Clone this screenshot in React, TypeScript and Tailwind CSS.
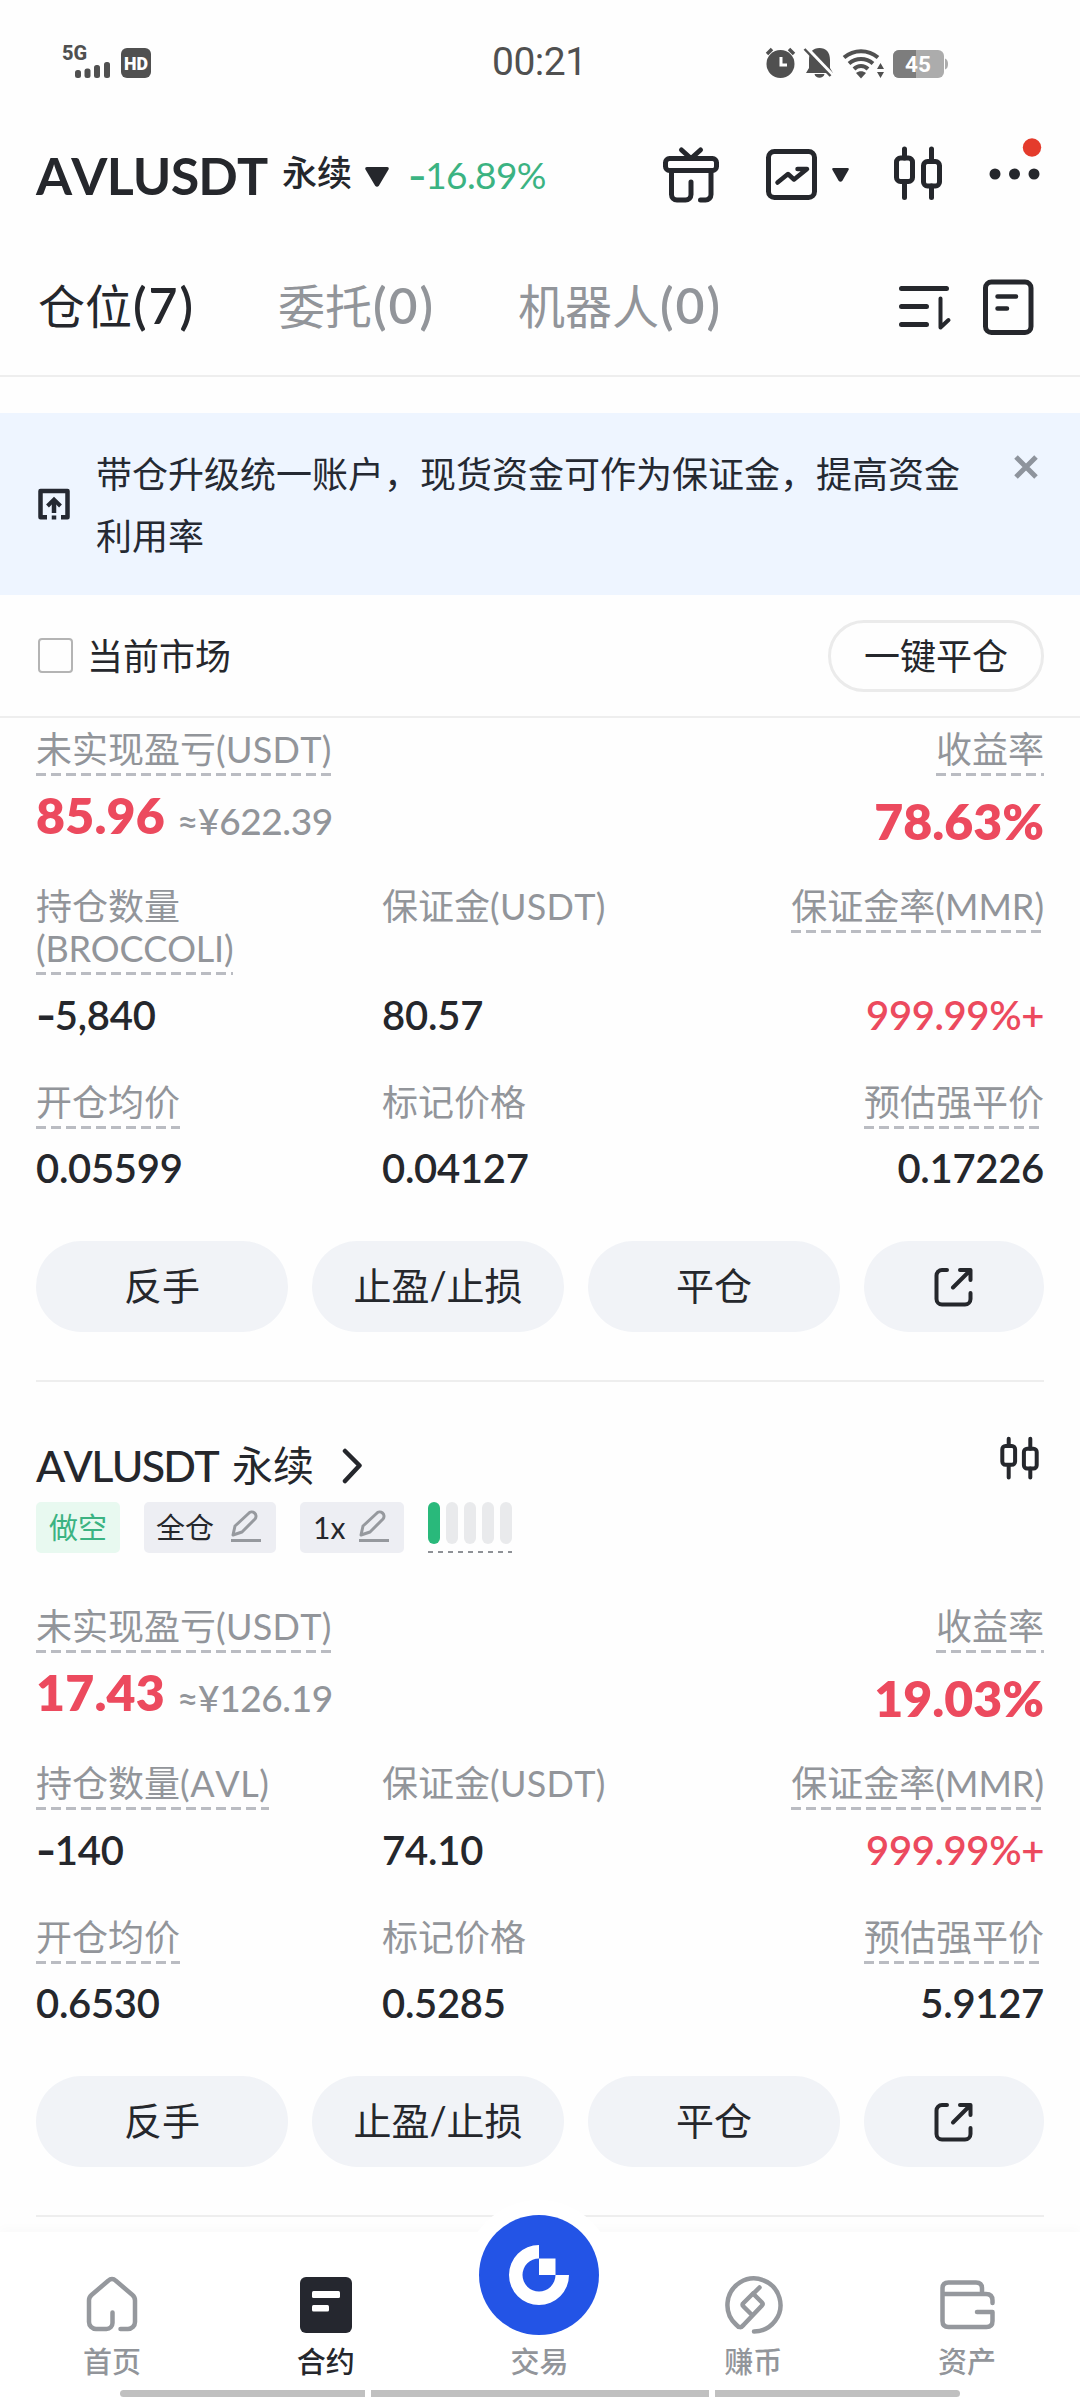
import type { ReactNode } from "react";

function Candles({ className }: { className: string }) {
  return (
    <svg viewBox="0 0 56 60" fill="none" stroke="#25272c" strokeWidth="5" strokeLinecap="round" className={className}>
      <rect x="6.5" y="15" width="16" height="23.5" rx="4" />
      <path d="M14.5 6v9M14.5 39v15.5M41.5 6v12.500M41.5 43v11.500" />
      <rect x="33.500" y="18.500" width="16" height="24.500" rx="4" />
    </svg>
  );
}

function Pencil() {
  return (
    <svg viewBox="0 0 32 34" fill="none" stroke="#96999e" strokeWidth="3" strokeLinejoin="round" className="-mt-[3px] h-[34px] w-8">
      <path d="M3 26l2-9L18.500 4.500a4 4 0 0 1 6.500 5.500L12 23z" />
      <path d="M1 31.500h30" />
    </svg>
  );
}

function Minus() {
  return <b className="mr-[4px] inline-block origin-left scale-x-[1.350] font-[inherit]">-</b>;
}

function StatusBar() {
  return (
    <div className="flex h-[124px] items-center pl-[62px] text-[#505050]">
      <svg viewBox="0 -10 92 44" className="mb-[10px] h-[44px] w-[92px]" fill="#505050">
        <text x="0" y="15" fontFamily="Roboto" fontWeight="800" fontSize="20">5G</text>
        <rect x="13" y="25" width="6" height="8" rx="2.500" />
        <rect x="22.500" y="23.500" width="6" height="9.500" rx="2.500" />
        <rect x="32" y="20" width="6" height="13" rx="2.500" />
        <rect x="42" y="17" width="6" height="16" rx="2.500" />
        <rect x="59" y="3" width="30" height="30" rx="6" />
        <text x="62" y="25" fontFamily="Roboto" fontWeight="900" fontSize="19" fill="#fff" textLength="24" lengthAdjust="spacingAndGlyphs">HD</text>
      </svg>
      <div className="ml-[338px] w-[96px] font-['Roboto'] text-[39px] leading-[40px] font-[450] tracking-[-0.5px]">00:21</div>
      <svg viewBox="0 0 186 34" className="ml-[177px] h-[34px] w-[186px]" fill="#505050">
        <circle cx="15.500" cy="19" r="14" />
        <path d="M2 9l5-5M29 9l-5-5" stroke="#505050" strokeWidth="3.500" />
        <path d="M16 12v8h6" stroke="#fff" strokeWidth="3" fill="none" />
        <path d="M41 28l3-5v-8c0-8 4-12 10.500-12s10.500 4 10.500 12v8l3 5zM49.500 29h10c-1 5-9 5-10 0z" />
        <path d="M39 0L69 31.500" stroke="#fefefe" strokeWidth="3.500" />
        <path d="M39.500 4L65.500 31" stroke="#505050" strokeWidth="2.500" />
        <g fill="none" stroke="#505050" strokeWidth="4">
          <path d="M79 12.500C89 4 103 4 113 12.500" />
          <path d="M84 18.500c7-6 17-6 24 0" />
          <path d="M89 24c4-4 10-4 14 0" />
        </g>
        <path d="M91 28c3-2.500 7-2.500 10 0l-5 5.500z" />
        <path d="M112 24l3.500-6 3.500 6zM112 27h7l-3.500 6z" />
        <rect x="128" y="5" width="51" height="28" rx="6" fill="#acacac" />
        <path d="M151 5v28h-17a6 6 0 0 1-6-6V11a6 6 0 0 1 6-6z" fill="#7d7d7d" />
        <path d="M180 13.500q3 1 3 5.500t-3 5.500z" fill="#acacac" />
        <text x="140" y="27" fontFamily="Roboto" fontWeight="700" fontSize="22.500" fill="#fff">45</text>
      </svg>
    </div>
  );
}

function MarketHeader() {
  return (
    <div className="flex h-[102px] items-center pl-9">
      <span className="-mt-px w-[246px] text-[52px] leading-[60px] font-bold tracking-[-0.8px] [font-kerning:none]">AVLUSDT</span>
      <span className="-mt-[6px] text-[35px] leading-[60px] font-medium">永续</span>
      <svg viewBox="0 0 26 22" className="mt-1 ml-3 h-[22px] w-[26px]" fill="#25272c">
        <path d="M3 1h20q2.500 0 1.500 2.500L15 19.500q-2 2.500-4 0L1.500 3.500Q.5 1 3 1z" />
      </svg>
      <span className="-mt-px ml-[18px] w-[142px] text-[37px] leading-[60px] tracking-[-0.6px] text-[#3bb382]"><Minus />16.89%</span>
      <svg viewBox="0 0 62 60" fill="none" stroke="#25272c" strokeWidth="5" strokeLinecap="round" strokeLinejoin="round" className="ml-[110px] -mt-px h-[60px] w-[62px]">
        <rect x="5.500" y="13.500" width="51" height="12" rx="4" />
        <path d="M21.500 5L31 13.500 40.500 5" />
        <path d="M11.500 27v22.500a5.500 5.500 0 0 0 5.500 5.500h8.500a5.500 5.500 0 0 0 5.500-5.500V37M51 27v22.500a5.500 5.500 0 0 1-5.500 5.500H40.500" />
      </svg>
      <svg viewBox="0 0 58 58" fill="none" stroke="#25272c" strokeWidth="5" strokeLinecap="round" strokeLinejoin="round" className="ml-[41px] -mt-px h-[58px] w-[58px]">
        <rect x="5.500" y="5.500" width="46" height="46" rx="6" />
        <path strokeWidth="4.500" d="M14.500 36.500L25 28l6 5.500L44 23H34.500" />
      </svg>
      <svg viewBox="0 0 17 14" className="ml-[11px] h-[14px] w-[17px]" fill="#25272c">
        <path d="M1.500 0h14q2 0 1 2l-6 10.500q-2 2.500-4 0L.5 2q-1-2 1-2z" />
      </svg>
      <Candles className="ml-[41px] -mt-1 h-[60px] w-14" />
      <svg viewBox="0 -10 60 80" className="ml-[40px] -mt-[5px] h-[80px] w-[60px]" fill="#25272c">
        <circle cx="9" cy="31" r="5.500" />
        <circle cx="28.500" cy="31" r="5.500" />
        <circle cx="48" cy="31" r="5.500" />
        <circle cx="46" cy="4.500" r="9.200" fill="#e43b2c" />
      </svg>
    </div>
  );
}

function Tabs() {
  return (
    <div className="flex h-[151px] items-center border-b-2 border-[#eeeeee] pt-[10px] pl-[38px] text-[47px] leading-[60px] text-[#92959a] [&_b]:ml-px [&_b]:text-[50px] [&_b]:font-semibold [&_b]:tracking-[2px]">
      <span className="w-[240px] text-[#25272c]">仓位<b>(7)</b></span>
      <span className="w-[240px]">委托<b>(0)</b></span>
      <span className="w-[378px]">机器人<b>(0)</b></span>
      <svg viewBox="0 0 56 50" fill="none" stroke="#25272c" strokeWidth="5" strokeLinecap="round" strokeLinejoin="round" className="mt-1 h-[50px] w-14">
        <path d="M5.500 5.500h45M5.500 23.500h25M5.500 41.500h25" />
        <path strokeWidth="4" d="M44.500 15.500v29L52.500 37" />
      </svg>
      <svg viewBox="0 0 56 60" fill="none" stroke="#25272c" strokeWidth="5" strokeLinecap="round" className="mt-[2px] ml-[30px] h-[60px] w-14">
        <rect x="3.500" y="5" width="45.500" height="50.500" rx="6" />
        <path strokeWidth="4.500" d="M15.500 19.500h18.500M15.500 31.500h9.500" />
      </svg>
    </div>
  );
}

function Banner() {
  return (
    <div className="mt-9 flex h-[182px] bg-[#eef5ff] pl-[38px]">
      <svg viewBox="0 0 32 32" fill="none" stroke="#252932" className="mt-[75px] h-8 w-8">
        <path strokeWidth="4.500" strokeLinejoin="round" d="M9 29.200H2.500V3H29.500v26.200H23" />
        <path strokeWidth="4.500" d="M16 12v13M16 27.500v4" />
        <path strokeWidth="4" d="M9.500 18l6.500-6.500 6.500 6.500" />
      </svg>
      <p className="mt-[30px] ml-[26px] w-[870px] text-[36px] leading-[62px] text-[#252932]">
        带仓升级统一账户，现货资金可作为保证金，提高资金
        <br />
        利用率
      </p>
      <svg viewBox="0 0 24 24" stroke="#8e949d" strokeWidth="5" className="mt-[42px] ml-[48px] h-6 w-6">
        <path d="M2 2l20 20M22 2L2 22" />
      </svg>
    </div>
  );
}

function FilterRow() {
  return (
    <div className="flex h-[123px] items-center border-b-2 border-[#eeeeee] pr-9 pl-[38px] text-[36px] text-[#25272c]">
      <span className="h-[35px] w-[35px] rounded-[4px] border-[2.5px] border-[#b4b4b4]" />
      <span className="ml-[14px] leading-[44px]">当前市场</span>
      <button className="ml-auto h-[72px] w-[216px] rounded-full border-[3px] border-[#ebebeb] text-[36px] leading-[60px]">一键平仓</button>
    </div>
  );
}

function Label({ children, dashed = true }: { children: ReactNode; dashed?: boolean }) {
  return (
    <div className="flex h-fit w-fit flex-col pt-px text-[36px] leading-[42px] text-[#92959a] [font-kerning:none]">
      <span>{children}</span>
      <span
        className={
          dashed
            ? "mt-[3px] h-[3px] bg-[repeating-linear-gradient(90deg,#babcc2_0_10px,transparent_10px_15px)]"
            : "mt-[3px] h-[3px]"
        }
      />
    </div>
  );
}

function Action({ children }: { children: ReactNode }) {
  return (
    <button className="flex h-[91px] w-[252px] items-center justify-center rounded-full bg-[#f1f3f7] pb-[3px] text-[38px] leading-[60px] text-[#25272c]">
      {children}
    </button>
  );
}

type Position = {
  pnl: string;
  fiat: string;
  roi: string;
  size: string;
  margin: string;
  entry: string;
  mark: string;
  liq: string;
  sizeLabel: ReactNode;
};

function PositionBody({ p }: { p: Position }) {
  return (
    <>
      <div className="flex h-[157px] justify-between">
        <div>
          <Label>未实现盈亏<b className="font-normal tracking-[0.3px]">(USDT)</b></Label>
          <div className="mt-[9px] flex items-baseline leading-[60px]">
            <span className="w-[141px] text-[50px] font-extrabold tracking-[0.2px] text-[#ec4a5e]">{p.pnl}</span>
            <span className="translate-y-px text-[37px] font-medium tracking-[-0.4px] text-[#92959a]">≈¥{p.fiat}</span>
          </div>
        </div>
        <div className="flex flex-col items-end">
          <Label>收益率</Label>
          <span className="mt-[15px] text-[50px] leading-[60px] font-extrabold text-[#ec4a5e]">{p.roi}</span>
        </div>
      </div>
      <div className="grid grid-cols-[346px_1fr_auto] text-[40px] leading-[48px] font-semibold tracking-[-0.2px] text-[#25272c]">
        <div className="font-normal tracking-normal"><Label>{p.sizeLabel}</Label></div>
        <div className="font-normal tracking-normal"><Label dashed={false}>保证金<b className="font-normal tracking-[0.3px]">(USDT)</b></Label></div>
        <div className="font-normal tracking-normal"><Label>保证金率(MMR)</Label></div>
        <div className="mt-[16px]"><Minus />{p.size}</div>
        <div className="mt-[16px]">{p.margin}</div>
        <div className="mt-[16px] text-right tracking-[-0.4px] text-[#ec4a5e]">999.99%+</div>
      </div>
      <div className="mt-[41px] grid grid-cols-[346px_1fr_auto] text-[40px] leading-[48px] font-semibold tracking-[-0.3px] text-[#25272c]">
        <div className="font-normal tracking-normal"><Label>开仓均价</Label></div>
        <div className="font-normal tracking-normal"><Label dashed={false}>标记价格</Label></div>
        <div className="flex justify-end font-normal tracking-normal">
          <Label>预估强平价</Label>
        </div>
        <div className="mt-[15px]">{p.entry}</div>
        <div className="mt-[15px]">{p.mark}</div>
        <div className="mt-[15px] text-right">{p.liq}</div>
      </div>
      <div className="mt-[49px] flex gap-6">
        <Action>反手</Action>
        <Action>止盈/止损</Action>
        <Action>平仓</Action>
        <button className="flex h-[91px] w-[180px] items-center justify-center rounded-full bg-[#f1f3f7]">
          <svg viewBox="0 0 42 42" fill="none" stroke="#25272c" strokeWidth="4" strokeLinecap="round" strokeLinejoin="round" className="h-[42px] w-[42px]">
            <path d="M14 4H9a5.500 5.500 0 0 0-5.500 5.500V33A5.500 5.500 0 0 0 9 38.500H32A5.500 5.500 0 0 0 37.500 33V27" />
            <path d="M27 4H37.500V14M37 4.500L20 21.500" />
          </svg>
        </button>
      </div>
      <div className="mt-12 h-[2px] bg-[#eeeeee]" />
    </>
  );
}

function PositionTitle() {
  return (
    <div className="flex justify-between pt-[54px] pb-[51px]">
      <div>
        <div className="flex h-[66px] items-start text-[43px] leading-[60px] font-medium">
          <span className="w-[196px] tracking-[-1.7px] [font-kerning:none]">AVLUSDT</span>
          <span className="text-[41px] font-normal">永续</span>
          <svg viewBox="0 0 22 36" fill="none" stroke="#25272c" strokeWidth="4.500" strokeLinecap="round" strokeLinejoin="round" className="mt-3 ml-[28px] h-9 w-[22px]">
            <path d="M3 3l14.500 14.500L3 33" />
          </svg>
        </div>
        <div className="flex h-[51px] text-[30px] leading-[51px]">
          <span className="w-[84px] rounded-[5px] bg-[#e8f9f0] text-center text-[29px] text-[#3bb382]">做空</span>
          <span className="ml-6 flex w-[132px] items-center justify-between rounded-[5px] bg-[#edeef3] pr-[14px] pl-[12px] text-[29px]">全仓<Pencil /></span>
          <span className="ml-6 flex w-[104px] items-center justify-between rounded-[5px] bg-[#edeef3] pr-[14px] pl-[13px]">1x<Pencil /></span>
          <div className="ml-6 flex w-[84px] flex-col justify-between">
            <div className="flex gap-[6px]">
              <i className="h-[42px] w-3 rounded-full bg-[#29b97b]" />
              <i className="h-[42px] w-3 rounded-full bg-[#e9eaec]" />
              <i className="h-[42px] w-3 rounded-full bg-[#e9eaec]" />
              <i className="h-[42px] w-3 rounded-full bg-[#e9eaec]" />
              <i className="h-[42px] w-3 rounded-full bg-[#e9eaec]" />
            </div>
            <div className="h-[2px] bg-[repeating-linear-gradient(90deg,#8e9196_0_5px,transparent_5px_10px)]" />
          </div>
        </div>
      </div>
      <Candles className="-mt-[2px] mr-[2px] h-12 w-[45px]" />
    </div>
  );
}

function NavItem({ label, active, children }: { label: string; active?: boolean; children?: ReactNode }) {
  return (
    <div className="flex flex-1 flex-col items-center">
      <div className="mt-[41px] h-[64px]">{children}</div>
      <span className={active ? "text-[29px] leading-[50px] font-medium text-[#25272c]" : "text-[29px] leading-[50px] font-medium text-[#92959a]"}>
        {label}
      </span>
    </div>
  );
}

function BottomNav() {
  return (
    <nav className="relative mt-[15px] h-[168px] bg-white shadow-[0_-4px_10px_rgba(0,0,0,0.02)]">
      <div className="absolute -top-8 left-[464px] flex h-[150px] w-[150px] items-center justify-center rounded-full bg-white">
        <svg viewBox="0 0 120 120" className="h-[120px] w-[120px]">
          <circle cx="60" cy="60" r="60" fill="#2354e6" />
          <path d="M60 30a30 30 0 1 0 30 30H76.500a16.500 16.500 0 1 1-16.500-16.500z" fill="#fff" />
          <path d="M60 43.500h16.500V60H60z" fill="#fff" />
        </svg>
      </div>
      <div className="relative flex pr-[6px] pl-[5px]">
        <NavItem label="首页">
          <svg viewBox="0 0 60 64" fill="none" stroke="#95989d" strokeWidth="4.500" strokeLinecap="round" strokeLinejoin="round" className="h-16 w-[60px]">
            <path d="M38.500 56H46a7 7 0 0 0 7-7V27.500a7 7 0 0 0-2.500-5.500L33.500 7.500a5 5 0 0 0-7 0L9.500 22A7 7 0 0 0 7 27.500V49a7 7 0 0 0 7 7h10.500a6 6 0 0 0 6-6V39.500" />
          </svg>
        </NavItem>
        <NavItem label="合约" active>
          <svg viewBox="0 0 60 64" className="h-16 w-[60px]">
            <rect x="4" y="4" width="52" height="56" rx="6" fill="#25272f" />
            <rect x="16" y="18" width="28" height="7" rx="1.500" fill="#fff" />
            <rect x="16" y="32" width="17" height="6.500" rx="1.500" fill="#fff" />
          </svg>
        </NavItem>
        <NavItem label="交易" />
        <NavItem label="赚币">
          <svg viewBox="0 0 60 64" fill="none" stroke="#95989d" strokeWidth="4.500" strokeLinecap="round" strokeLinejoin="round" className="h-16 w-[60px]">
            <path d="M31 58.500A26.500 26.500 0 1 0 13 51.500Q17 56.500 20.500 52L39 32.500Q40.500 31 39 29.500L30 20.500 20.500 30q-2 1.500 0 3.500L29 42" />
            <path d="M30 21l6.500-6.500" />
          </svg>
        </NavItem>
        <NavItem label="资产">
          <svg viewBox="0 0 60 64" fill="none" stroke="#95989d" strokeWidth="4.500" strokeLinecap="round" strokeLinejoin="round" className="h-16 w-[60px]">
            <path d="M5.500 21H49q6.500 0 6.500 6.500V30M45 21V15.500Q45 9.500 39 9.500H11.500Q5.500 9.500 5.500 15.500V48Q5.500 54 11.500 54H49.500Q55.500 54 55.500 48V39H40" />
          </svg>
        </NavItem>
      </div>
      <div className="mt-[3px] flex gap-[6px] pl-[120px]">
        <div className="h-[7px] w-[245px] rounded-l-full bg-[#c0c0c0]" />
        <div className="h-[7px] w-[338px] bg-[#c0c0c0]" />
        <div className="h-[7px] w-[245px] rounded-r-full bg-[#c0c0c0]" />
      </div>
    </nav>
  );
}

const broccoli: Position = {
  pnl: "85.96",
  fiat: "622.39",
  roi: "78.63%",
  size: "5,840",
  margin: "80.57",
  entry: "0.05599",
  mark: "0.04127",
  liq: "0.17226",
  sizeLabel: (
    <>
      持仓数量
      <br />
      <b className="font-normal tracking-[-0.2px]">(BROCCOLI)</b>
    </>
  ),
};

const avl: Position = {
  pnl: "17.43",
  fiat: "126.19",
  roi: "19.03%",
  size: "140",
  margin: "74.10",
  entry: "0.6530",
  mark: "0.5285",
  liq: "5.9127",
  sizeLabel: (
    <>
      持仓数量<b className="font-normal tracking-[0.6px]">(AVL)</b>
    </>
  ),
};

export default function App() {
  return (
    <div className="h-[2400px] w-[1080px] overflow-hidden bg-[#fefefe] font-['Lato','Noto_Sans_CJK_SC',sans-serif] text-[#25272c]">
      <StatusBar />
      <MarketHeader />
      <Tabs />
      <Banner />
      <FilterRow />
      <main className="px-9 pt-[9px]">
        <PositionBody p={broccoli} />
        <PositionTitle />
        <PositionBody p={avl} />
      </main>
      <BottomNav />
    </div>
  );
}
